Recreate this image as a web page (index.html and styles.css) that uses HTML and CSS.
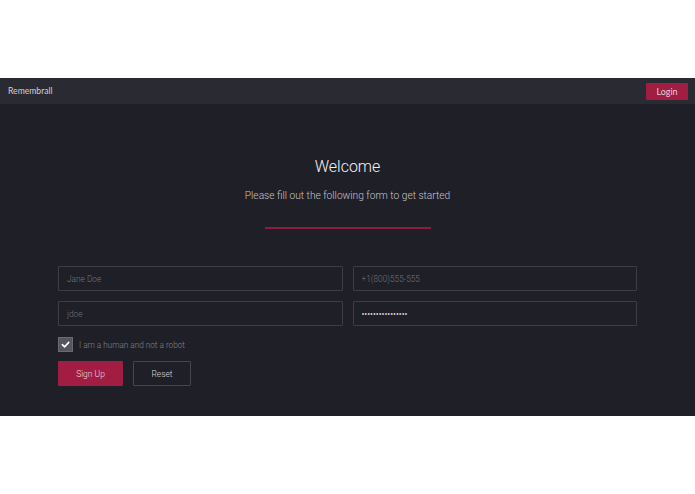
FILE: index.html
```html
<!DOCTYPE html>
<html>
<head>
<meta charset="utf-8">
<link rel="stylesheet" href="styles.css">
</head>
<body>
<div class="page">
  <div class="topspace"></div>
  <nav class="navbar">
    <span class="brand">Remembrall</span>
    <button class="btn-login">Login</button>
  </nav>
  <main class="main">
    <div class="hero">
      <h1 class="title">Welcome</h1>
      <p class="subtitle">Please fill out the following form to get started</p>
      <div class="rule"></div>
    </div>
    <form class="form">
      <div class="grid">
        <input class="field" type="text" placeholder="Jane Doe">
        <input class="field" type="text" placeholder="+1(800)555-555">
        <input class="field" type="text" placeholder="jdoe">
        <input class="field pass" type="password" value="pppppppppppppppp">
      </div>
      <label class="check">
        <span class="box"><svg viewBox="0 0 10 10" width="9" height="9"><path d="M1.5 5.2 L4 7.6 L8.6 2.6" fill="none" stroke="#fff" stroke-width="1.8" stroke-linecap="round" stroke-linejoin="round"/></svg></span>
        <span class="check-text">I am a human and not a robot</span>
      </label>
      <div class="actions">
        <button type="button" class="btn-primary">Sign Up</button>
        <button type="button" class="btn-outline">Reset</button>
      </div>
    </form>
  </main>
</div>
</body>
</html>
```
FILE: styles.css
```css
html, body {
  margin: 0;
  padding: 0;
  background: #ffffff;
}
body {
  font-family: Roboto, "Liberation Sans", sans-serif;
}
.page {
  display: flex;
  flex-direction: column;
}
.topspace {
  height: 78px;
}
.navbar {
  height: 26px;
  background: #2a2a33;
  display: flex;
  align-items: center;
  justify-content: space-between;
  padding: 0 7px 0 8px;
}
.brand {
  font-family: Lato, "Liberation Sans", sans-serif;
  font-weight: 400;
  font-size: 8.6px;
  color: #d0d0d6;
}
.btn-login {
  height: 17px;
  width: 42px;
  margin: 0;
  border: none;
  padding: 0;
  background: #a11d42;
  color: #e0d2d8;
  font-family: Lato, "Liberation Sans", sans-serif;
  font-size: 9px;
  border-radius: 1px;
}
.main {
  background: #1f1f27;
  height: 312px;
  display: flex;
  flex-direction: column;
  align-items: center;
}
.hero {
  display: flex;
  flex-direction: column;
  align-items: center;
  padding-top: 53px;
}
.title {
  margin: 0;
  font-weight: 300;
  font-size: 16px;
  line-height: 20px;
  color: #f2f2f4;
}
.subtitle {
  margin: 12px 0 0 0;
  font-weight: 300;
  font-size: 10.2px;
  line-height: 14px;
  color: #c6c6cc;
}
.rule {
  margin-top: 24px;
  width: 166px;
  height: 2px;
  background: #8e1c3e;
}
.form {
  width: 579px;
  margin-top: 37px;
}
.grid {
  display: grid;
  grid-template-columns: 1fr 1fr;
  column-gap: 10px;
  row-gap: 10px;
}
.field {
  box-sizing: border-box;
  height: 25px;
  width: 100%;
  margin: 0;
  background: #1f1f27;
  border: 1px solid #3d3d46;
  border-radius: 1px;
  padding: 0 8px;
  font-family: Roboto, "Liberation Sans", sans-serif;
  font-weight: 300;
  font-size: 8.3px;
  color: #cfcfd4;
  outline: none;
}
.field::placeholder {
  color: #75757d;
}
.pass {
  font-size: 8.5px;
  font-weight: 400;
  letter-spacing: 0;
  color: #d8d8dc;
}
.check {
  display: flex;
  align-items: center;
  margin-top: 11px;
  gap: 6px;
}
.box {
  box-sizing: border-box;
  width: 15px;
  height: 15px;
  background: #55555d;
  border: 1px solid #6a6a72;
  display: flex;
  align-items: center;
  justify-content: center;
}
.check-text {
  font-weight: 300;
  font-size: 8.2px;
  color: #85858c;
}
.actions {
  display: flex;
  gap: 10px;
  margin-top: 9px;
}
.btn-primary, .btn-outline {
  box-sizing: border-box;
  height: 25px;
  margin: 0;
  padding: 0;
  font-family: Roboto, "Liberation Sans", sans-serif;
  font-weight: 300;
  font-size: 8.5px;
  border-radius: 1px;
}
.btn-primary {
  width: 65px;
  background: #a11d42;
  border: none;
  color: #eadde2;
}
.btn-outline {
  width: 58px;
  background: transparent;
  border: 1px solid #45454d;
  color: #d8d8dc;
}
```
